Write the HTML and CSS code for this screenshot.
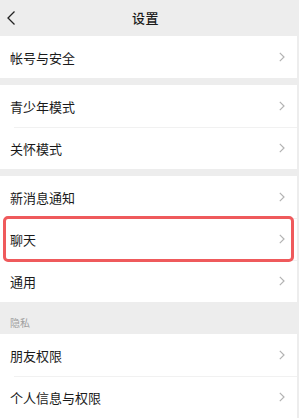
FILE: index.html
```html
<!DOCTYPE html>
<html lang="zh">
<head>
<meta charset="utf-8">
<link rel="stylesheet" href="styles.css">
</head>
<body>
<div class="page">
  <header class="nav">
    <svg class="back" width="10" height="16" viewBox="0 0 10 16"><path d="M8.5 1.5 L2 8 L8.5 14.5" fill="none" stroke="#222" stroke-width="1.3"/></svg>
    <div class="title">设置</div>
  </header>

  <section class="group">
    <div class="row"><span>帐号与安全</span><svg class="chev" width="6" height="10" viewBox="0 0 6 10"><path d="M0.8 0.8 L5 5 L0.8 9.2" fill="none" stroke="#b3b3b3" stroke-width="1.2"/></svg></div>
  </section>

  <section class="group">
    <div class="row"><span>青少年模式</span><svg class="chev" width="6" height="10" viewBox="0 0 6 10"><path d="M0.8 0.8 L5 5 L0.8 9.2" fill="none" stroke="#b3b3b3" stroke-width="1.2"/></svg></div>
    <div class="row"><span>关怀模式</span><svg class="chev" width="6" height="10" viewBox="0 0 6 10"><path d="M0.8 0.8 L5 5 L0.8 9.2" fill="none" stroke="#b3b3b3" stroke-width="1.2"/></svg></div>
  </section>

  <section class="group">
    <div class="row"><span>新消息通知</span><svg class="chev" width="6" height="10" viewBox="0 0 6 10"><path d="M0.8 0.8 L5 5 L0.8 9.2" fill="none" stroke="#b3b3b3" stroke-width="1.2"/></svg></div>
    <div class="row highlight"><span>聊天</span><svg class="chev" width="6" height="10" viewBox="0 0 6 10"><path d="M0.8 0.8 L5 5 L0.8 9.2" fill="none" stroke="#b3b3b3" stroke-width="1.2"/></svg></div>
    <div class="row"><span>通用</span><svg class="chev" width="6" height="10" viewBox="0 0 6 10"><path d="M0.8 0.8 L5 5 L0.8 9.2" fill="none" stroke="#b3b3b3" stroke-width="1.2"/></svg></div>
  </section>

  <div class="label">隐私</div>
  <section class="group nogap">
    <div class="row"><span>朋友权限</span><svg class="chev" width="6" height="10" viewBox="0 0 6 10"><path d="M0.8 0.8 L5 5 L0.8 9.2" fill="none" stroke="#b3b3b3" stroke-width="1.2"/></svg></div>
    <div class="row"><span>个人信息与权限</span><svg class="chev" width="6" height="10" viewBox="0 0 6 10"><path d="M0.8 0.8 L5 5 L0.8 9.2" fill="none" stroke="#b3b3b3" stroke-width="1.2"/></svg></div>
  </section>
</div>
</body>
</html>
```
FILE: styles.css
```css
html, body {
  margin: 0;
  padding: 0;
  background: #ededed;
}
body {
  font-family: "Noto Sans CJK SC", "Noto Sans", sans-serif;
  color: #1a1a1a;
}
.page {
  width: 297px;
  height: 418px;
  overflow: hidden;
  display: flex;
  flex-direction: column;
  background: #ededed;
}
.nav {
  height: 36px;
  flex: none;
  display: flex;
  align-items: center;
  padding-left: 6px;
}
.back {
  display: block;
}
.title {
  flex: 1;
  text-align: center;
  font-size: 13px;
  font-weight: 500;
  margin-right: 22px;
  letter-spacing: 0.5px;
  padding-bottom: 1px;
}
.group {
  background: #fff;
  flex: none;
  margin-bottom: 7px;
}
.group.nogap {
  margin-bottom: 0;
}
.row {
  height: 42px;
  display: flex;
  align-items: center;
  justify-content: space-between;
  padding: 0 12px 0 10px;
  font-size: 13px;
  position: relative;
}
.row + .row::before {
  content: "";
  position: absolute;
  left: 14px;
  right: 0;
  top: 0;
  height: 1px;
  background: #f1f1f1;
}
.row.highlight::after {
  content: "";
  position: absolute;
  z-index: 2;
  left: 3px;
  right: 3px;
  top: -2px;
  bottom: -2px;
  border: 3px solid #ef5a5c;
  border-radius: 5px;
}
.chev {
  display: block;
}
.label {
  height: 27px;
  margin-top: -7px;
  padding: 14px 0 0 10px;
  font-size: 10px;
  color: #a0a0a0;
  line-height: 14px;
}
```
